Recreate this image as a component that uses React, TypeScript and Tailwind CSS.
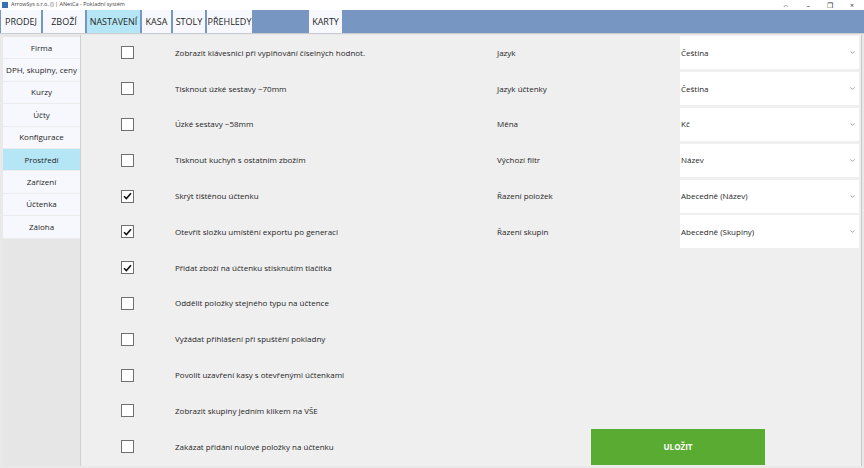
import { ChevronDown } from "lucide-react";

const tabs = [
  { label: "PRODEJ", w: "w-[40px]" },
  { label: "ZBOŽÍ", w: "w-[42px]" },
  { label: "NASTAVENÍ", w: "w-[53px]", active: true },
  { label: "KASA", w: "w-[29px]" },
  { label: "STOLY", w: "w-[32px]" },
  { label: "PŘEHLEDY", w: "w-[45px]" },
];

const menu = [
  "Firma",
  "DPH, skupiny, ceny",
  "Kurzy",
  "Účty",
  "Konfigurace",
  "Prostředí",
  "Zařízení",
  "Účtenka",
  "Záloha",
];

const options = [
  { label: "Zobrazit klávesnici při vyplňování číselných hodnot.", checked: false },
  { label: "Tisknout úzké sestavy ~70mm", checked: false },
  { label: "Úzké sestavy ~58mm", checked: false },
  { label: "Tisknout kuchyň s ostatním zbožím", checked: false },
  { label: "Skrýt tištěnou účtenku", checked: true },
  { label: "Otevřít složku umístění exportu po generaci", checked: true },
  { label: "Přidat zboží na účtenku stisknutím tlačítka", checked: true },
  { label: "Oddělit položky stejného typu na účtence", checked: false },
  { label: "Vyžádat přihlášení při spuštění pokladny", checked: false },
  { label: "Povolit uzavření kasy s otevřenými účtenkami", checked: false },
  { label: "Zobrazit skupiny jedním klikem na VŠE", checked: false },
  { label: "Zakázat přidání nulové položky na účtenku", checked: false },
];

const selects = [
  { label: "Jazyk", value: "Čeština" },
  { label: "Jazyk účtenky", value: "Čeština" },
  { label: "Měna", value: "Kč" },
  { label: "Výchozí filtr", value: "Název" },
  { label: "Řazení položek", value: "Abecedně (Název)" },
  { label: "Řazení skupin", value: "Abecedně (Skupiny)" },
];

function Checkbox({ checked }: { checked: boolean }) {
  return (
    <div className="w-[13px] h-[13px] border border-[#707070] bg-white flex items-center justify-center">
      {checked && (
        <svg width="9" height="8" viewBox="0 0 9 8">
          <path d="M1 4.2 L3.4 6.6 L8 1.2" fill="none" stroke="#111" strokeWidth="1.6" />
        </svg>
      )}
    </div>
  );
}

export default function App() {
  return (
    <div
      className="w-[864px] h-[468px] overflow-hidden flex flex-col bg-white text-[#262626]"
      style={{ fontFamily: '"Open Sans", "Noto Sans", sans-serif' }}
    >
      {/* title bar */}
      <div className="h-[10px] flex items-center px-[2px] bg-white">
        <div className="w-[6px] h-[6px] bg-[#3a6fb0] mr-[3px]" />
        <span className="text-[5.5px] leading-none text-[#444]">
          ArrowSys s.r.o. () | ANetCa - Pokladní systém
        </span>
        <div className="ml-auto flex items-center gap-[17px] pr-[8px] text-[7px] leading-none text-[#333]">
          <span>⇔</span>
          <span>–</span>
          <span>❐</span>
          <span>×</span>
        </div>
      </div>

      {/* tab bar */}
      <div className="h-[24px] bg-[#7896c2] flex items-end border-b border-[#c9cdd3]">
        <div className="flex h-[23px] gap-[2px] pl-[1px]">
          {tabs.map((t) => (
            <div
              key={t.label}
              className={`${t.w} shrink-0 flex items-center justify-center text-[9px] ${
                t.active ? "bg-[#b5e6f6]" : "bg-[#f7f8fd]"
              }`}
            >
              {t.label}
            </div>
          ))}
          <div className="w-[53px] shrink-0" />
          <div className="w-[33px] shrink-0 flex items-center justify-center text-[9px] bg-[#f7f8fd]">
            KARTY
          </div>
        </div>
      </div>

      {/* content */}
      <div className="flex-1 flex bg-[#e9e9e9] pt-[1px] pl-[3px] pr-[2px] pb-[2px]">
        <div className="w-[78px] shrink-0 flex flex-col bg-[#e6e6e6] border-r border-[#d0d0d0] pt-[2px]">
          {menu.map((m) => (
            <div
              key={m}
              className={`h-[22.4px] flex items-center justify-center text-[8px] border-b border-[#ececec] ${
                m === "Prostředí" ? "bg-[#b5e6f6]" : "bg-[#f7f8fd]"
              }`}
            >
              {m}
            </div>
          ))}
        </div>

        <div className="flex-1 bg-[#efefef] flex flex-col border-r border-[#c8c8c8]">
          {options.map((o, i) => (
            <div key={o.label} className="h-[35.8px] flex items-center">
              <div className="w-[94px] shrink-0 flex justify-start pl-[40px]">
                <Checkbox checked={o.checked} />
              </div>
              <div className="w-[322px] shrink-0 text-[8px] whitespace-nowrap">{o.label}</div>
              {selects[i] && (
                <>
                  <div className="w-[183px] shrink-0 text-[8px]">{selects[i].label}</div>
                  <div className="w-[179px] shrink-0 h-[33px] bg-white flex items-center pl-[1px] pr-[3px] text-[8px]">
                    <span>{selects[i].value}</span>
                    <ChevronDown className="ml-auto text-[#666]" size={7} strokeWidth={2} />
                  </div>
                </>
              )}
              {i === options.length - 1 && (
                <div className="ml-[94px] shrink-0 w-[174px] h-[36px] mt-[1px] bg-[#5aab32] flex items-center justify-center text-white text-[8px] font-bold">
                  ULOŽIT
                </div>
              )}
            </div>
          ))}
        </div>
      </div>
    </div>
  );
}
